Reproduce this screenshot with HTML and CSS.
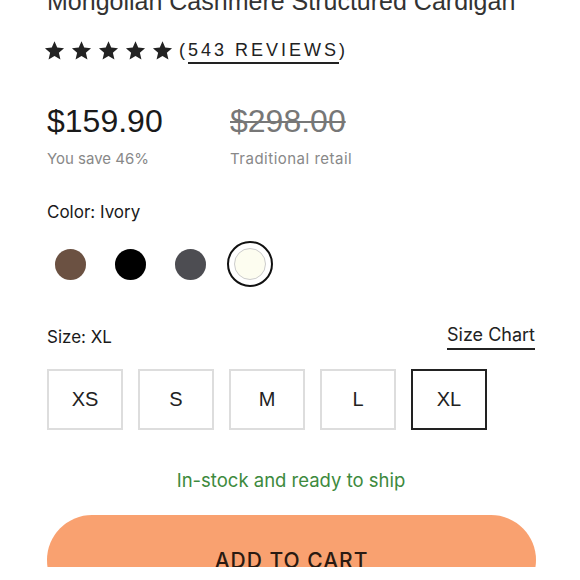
FILE: index.html
```html
<!DOCTYPE html>
<html>
<head>
<meta charset="utf-8">
<link rel="stylesheet" href="styles.css">
</head>
<body>
<div class="page">
  <h1 class="title">Mongolian Cashmere Structured Cardigan</h1>
  <div class="rating">
    <div class="stars">
      <svg viewBox="0 0 24 24" class="star"><path d="M12 1.5l3.1 7.2 7.8.7-5.9 5.2 1.8 7.7L12 18.2l-6.8 4.1 1.8-7.7-5.9-5.2 7.8-.7z"/></svg>
      <svg viewBox="0 0 24 24" class="star"><path d="M12 1.5l3.1 7.2 7.8.7-5.9 5.2 1.8 7.7L12 18.2l-6.8 4.1 1.8-7.7-5.9-5.2 7.8-.7z"/></svg>
      <svg viewBox="0 0 24 24" class="star"><path d="M12 1.5l3.1 7.2 7.8.7-5.9 5.2 1.8 7.7L12 18.2l-6.8 4.1 1.8-7.7-5.9-5.2 7.8-.7z"/></svg>
      <svg viewBox="0 0 24 24" class="star"><path d="M12 1.5l3.1 7.2 7.8.7-5.9 5.2 1.8 7.7L12 18.2l-6.8 4.1 1.8-7.7-5.9-5.2 7.8-.7z"/></svg>
      <svg viewBox="0 0 24 24" class="star"><path d="M12 1.5l3.1 7.2 7.8.7-5.9 5.2 1.8 7.7L12 18.2l-6.8 4.1 1.8-7.7-5.9-5.2 7.8-.7z"/></svg>
    </div>
    <span class="reviews">(<span class="reviews-link">543 REVIEWS</span>)</span>
  </div>
  <div class="prices">
    <div class="price-col">
      <div class="price">$159.90</div>
      <div class="price-note">You save 46%</div>
    </div>
    <div class="price-col">
      <div class="price old">$298.00</div>
      <div class="price-note">Traditional retail</div>
    </div>
  </div>
  <div class="label color-label">Color: Ivory</div>
  <div class="swatches">
    <span class="swatch"><span class="dot brown"></span></span>
    <span class="swatch"><span class="dot black"></span></span>
    <span class="swatch"><span class="dot grey"></span></span>
    <span class="swatch selected"><span class="dot ivory"></span></span>
  </div>
  <div class="size-head">
    <span class="label">Size: XL</span>
    <span class="size-chart">Size Chart</span>
  </div>
  <div class="sizes">
    <div class="size">XS</div>
    <div class="size">S</div>
    <div class="size">M</div>
    <div class="size">L</div>
    <div class="size active">XL</div>
  </div>
  <div class="stock">In-stock and ready to ship</div>
  <button class="cart">ADD TO CART</button>
</div>
</body>
</html>
```
FILE: styles.css
```css
html, body {
  margin: 0;
  padding: 0;
  background: #fff;
  overflow: hidden;
}
.page {
  width: 580px;
  height: 580px;
  padding: 0 45px 0 47px;
  box-sizing: border-box;
  font-family: "Liberation Sans", Arial, sans-serif;
  color: #1a1a1a;
}
.title {
  margin: -13px 0 0 0;
  font-weight: 400;
  font-size: 25px;
  line-height: 28px;
  color: #333;
  white-space: nowrap;
}
.rating {
  display: flex;
  align-items: center;
  margin-top: 23px;
  margin-left: -3px;
  height: 24px;
}
.stars {
  display: flex;
  gap: 6px;
}
.star {
  width: 21px;
  height: 21px;
  fill: #222;
}
.reviews {
  margin-left: 6px;
  font-size: 18px;
  letter-spacing: 3px;
  color: #222;
}
.reviews-link {
  border-bottom: 2px solid #222;
  padding-bottom: 2px;
}
.prices {
  display: flex;
  margin-top: 39px;
}
.price-col {
  width: 183px;
}
.price {
  font-size: 32px;
  line-height: 40px;
  color: #1a1a1a;
}
.price.old {
  color: #777;
  text-decoration: line-through;
  text-decoration-thickness: 2px;
}
.price-note {
  font-family: Inter, "Liberation Sans", sans-serif;
  font-size: 15px;
  line-height: 20px;
  margin-top: 8px;
  color: #888;
}
.price-col + .price-col .price-note {
  letter-spacing: 0.5px;
}
.label {
  font-family: Inter, "Liberation Sans", sans-serif;
  font-size: 17px;
  line-height: 20px;
  color: #1a1a1a;
}
.color-label {
  margin-top: 33px;
}
.swatches {
  display: flex;
  gap: 14px;
  margin-top: 19px;
}
.swatch {
  width: 46px;
  height: 46px;
  border-radius: 50%;
  display: flex;
  align-items: center;
  justify-content: center;
  box-sizing: border-box;
}
.swatch.selected {
  border: 2px solid #111;
}
.dot {
  width: 31px;
  height: 31px;
  border-radius: 50%;
  box-sizing: border-box;
}
.brown { background: #6b5142; }
.black { background: #000; }
.grey { background: #4d4d52; }
.ivory { background: #fdfdf0; border: 1px solid #ccc; width: 32px; height: 32px; }
.size-head {
  display: flex;
  justify-content: space-between;
  align-items: flex-end;
  margin-top: 38px;
}
.size-chart {
  font-family: Inter, "Liberation Sans", sans-serif;
  font-size: 18px;
  line-height: 20px;
  color: #222;
  border-bottom: 2px solid #222;
  padding-bottom: 3px;
  margin-bottom: -3px;
}
.sizes {
  display: flex;
  gap: 15px;
  margin-top: 22px;
}
.size {
  width: 76px;
  height: 61px;
  box-sizing: border-box;
  border: 2px solid #ddd;
  display: flex;
  align-items: center;
  justify-content: center;
  font-size: 20px;
  color: #222;
}
.size.active {
  border-color: #222;
}
.stock {
  text-align: center;
  font-family: Inter, "Liberation Sans", sans-serif;
  font-size: 18.5px;
  line-height: 22px;
  color: #3d8a3d;
  margin-top: 39px;
}
.cart {
  display: block;
  width: 489px;
  height: 90px;
  margin-top: 24px;
  padding: 0;
  border: none;
  border-radius: 45px;
  background: #f9a170;
  font-family: Inter, "Liberation Sans", sans-serif;
  font-size: 21px;
  font-weight: 500;
  letter-spacing: 1px;
  color: #2a1a12;
}
```
